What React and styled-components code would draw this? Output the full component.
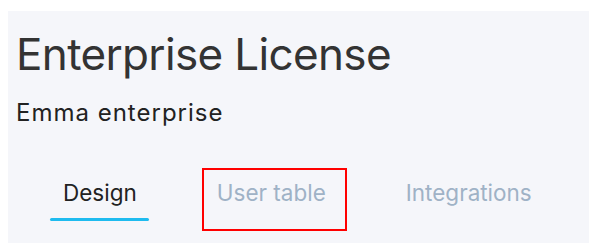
import styled, { createGlobalStyle } from 'styled-components';

const GlobalStyle = createGlobalStyle`
  body {
    margin: 0;
    background: #ffffff;
    font-family: 'Inter', 'Liberation Sans', sans-serif;
  }
`;

const Page = styled.div`
  padding: 11px 4px 9px 8px;
`;

const Panel = styled.section`
  height: 232px;
  box-sizing: border-box;
  background-color: #f5f6fa;
  padding: 17px 8px 0 8px;
  display: flex;
  flex-direction: column;
`;

const Title = styled.h1`
  margin: 0;
  font-size: 44px;
  line-height: 52px;
  font-weight: 400;
  letter-spacing: -0.65px;
  color: #333333;
`;

const Subtitle = styled.h2`
  margin: 19px 0 0 0;
  font-size: 24px;
  line-height: 28px;
  font-weight: 400;
  letter-spacing: 1px;
  color: #222222;
`;

const Tabs = styled.nav`
  display: flex;
  align-items: flex-start;
  gap: 55px;
  margin-top: 41px;
  padding-left: 34px;
`;

const Tab = styled.button`
  position: relative;
  border: none;
  background: none;
  padding: 11px 12px 14px 13px;
  font-family: inherit;
  font-size: 22.5px;
  line-height: 28px;
  color: ${(p) => (p.$active ? '#222222' : '#9fb2c6')};
  cursor: pointer;

  &::after {
    content: '';
    display: ${(p) => (p.$active ? 'block' : 'none')};
    position: absolute;
    left: 0;
    right: 0;
    bottom: 0;
    height: 3px;
    border-radius: 2px;
    background: #1ebbef;
  }

  &::before {
    content: '';
    display: ${(p) => (p.$focused ? 'block' : 'none')};
    position: absolute;
    top: 0;
    bottom: -10px;
    left: -2px;
    right: -9px;
    border: 2px solid #ff0000;
  }
`;

const tabs = ['Design', 'User table', 'Integrations'];

export default function App() {
  return (
    <>
      <GlobalStyle />
      <Page>
        <Panel>
          <Title>Enterprise License</Title>
          <Subtitle>Emma enterprise</Subtitle>
          <Tabs>
            {tabs.map((t, i) => (
              <Tab key={t} $active={i === 0} $focused={i === 1}>
                {t}
              </Tab>
            ))}
          </Tabs>
        </Panel>
      </Page>
    </>
  );
}
